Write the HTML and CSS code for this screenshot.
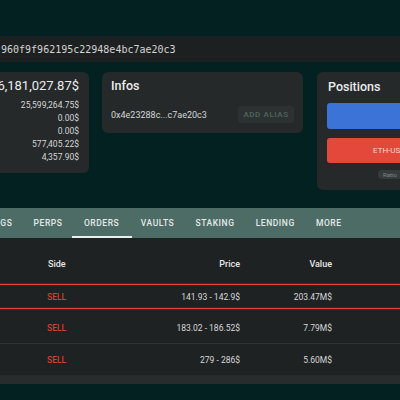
FILE: index.html
```html
<!DOCTYPE html>
<html lang="en">
<head>
<meta charset="utf-8">
<title>Account</title>
<link rel="stylesheet" href="styles.css">
</head>
<body>
<div class="page">
  <div class="addr"><span>960f9f962195c22948e4bc7ae20c3</span></div>

  <div class="cards">
    <section class="card balance">
      <div class="total">6,181,027.87$</div>
      <ul class="amounts">
        <li>25,599,264.75$</li>
        <li>0.00$</li>
        <li>0.00$</li>
        <li>577,405.22$</li>
        <li>4,357.90$</li>
      </ul>
    </section>

    <section class="card infos">
      <h2>Infos</h2>
      <div class="info-row">
        <span class="short-addr">0x4e23288c...c7ae20c3</span>
        <button class="alias" type="button">Add alias</button>
      </div>
    </section>

    <section class="card positions">
      <h2>Positions</h2>
      <div class="bar long"></div>
      <div class="bar short">ETH-USD</div>
      <div class="ratio"><span>Ratio</span></div>
    </section>
  </div>

  <nav class="tabs">
    <span class="tab first">HOLDINGS</span>
    <span class="tab">PERPS</span>
    <span class="tab active">ORDERS</span>
    <span class="tab">VAULTS</span>
    <span class="tab">STAKING</span>
    <span class="tab">LENDING</span>
    <span class="tab">MORE</span>
  </nav>

  <div class="orders">
    <div class="row head">
      <span>Side</span>
      <span class="num">Price</span>
      <span class="num">Value</span>
      <span></span>
    </div>
    <div class="row hl">
      <span class="sell">SELL</span>
      <span class="num">141.93 - 142.9$</span>
      <span class="num">203.47M$</span>
      <span></span>
    </div>
    <div class="row split">
      <span class="sell">SELL</span>
      <span class="num">183.02 - 186.52$</span>
      <span class="num">7.79M$</span>
      <span></span>
    </div>
    <div class="row">
      <span class="sell">SELL</span>
      <span class="num">279 - 286$</span>
      <span class="num">5.60M$</span>
      <span></span>
    </div>
    <div class="orders-foot"></div>
  </div>
</div>
</body>
</html>
```
FILE: styles.css
```css
html, body {
  margin: 0;
  padding: 0;
}

body {
  width: 400px;
  height: 400px;
  overflow: hidden;
  background: #032120;
  font-family: Roboto, "Noto Sans", sans-serif;
  color: #e6e6e6;
}

.page {
  padding-top: 36px;
}

/* full address strip */
.addr {
  height: 26px;
  display: flex;
  align-items: center;
  padding-left: 1px;
  background: #1d2020;
  font-family: "DejaVu Sans Mono", monospace;
  font-size: 10px;
  color: #d4d4d4;
  white-space: nowrap;
  overflow: hidden;
}

/* summary cards */
.cards {
  display: flex;
  align-items: flex-start;
  gap: 13px;
  margin-top: 10px;
}

.card {
  flex: none;
  box-sizing: border-box;
  background: #25292a;
  border-radius: 6px;
}

.card h2 {
  margin: 0;
  font-size: 12.5px;
  line-height: 16px;
  font-weight: 500;
  color: #ececec;
}

.balance {
  width: 110px;
  height: 101px;
  margin-left: -21px;
  padding: 5px 10px 8px 0;
  text-align: right;
}

.total {
  font-size: 13px;
  line-height: 18px;
  color: #ededed;
  white-space: nowrap;
}

.amounts {
  list-style: none;
  margin: 4px 0 0;
  padding: 0;
  font-size: 8.5px;
  line-height: 13px;
  color: #d6d6d6;
}

.infos {
  width: 201px;
  height: 61px;
  padding: 6px 9px 10px;
}

.info-row {
  display: flex;
  align-items: center;
  justify-content: space-between;
  height: 17px;
  margin-top: 12px;
}

.short-addr {
  font-size: 9px;
  color: #d6d6d6;
}

.alias {
  width: 56px;
  height: 17px;
  padding: 0;
  border: 0;
  border-radius: 3px;
  background: #2b3231;
  color: #52655f;
  font-family: Roboto, sans-serif;
  font-size: 8px;
  font-weight: 500;
  letter-spacing: 0.6px;
  text-transform: uppercase;
}

.positions {
  width: 120px;
  height: 118px;
  margin-left: 1px;
  padding: 7px 0 0 10px;
}

.positions h2 {
  padding-left: 1px;
}

.bar {
  border-radius: 3px;
}

.bar.long {
  height: 26px;
  margin-top: 8px;
  background: #3b73d7;
}

.bar.short {
  height: 25px;
  margin-top: 9px;
  padding-left: 46px;
  background: #e4483a;
  font-size: 8px;
  line-height: 25px;
  color: #f6d9d5;
  white-space: nowrap;
}

.ratio {
  display: flex;
  margin-top: 7px;
  padding-left: 51px;
}

.ratio span {
  height: 9px;
  padding: 0 5px;
  border-radius: 4px;
  background: #353b3b;
  font-size: 6px;
  line-height: 9px;
  color: #7d8886;
}

/* section tabs */
.tabs {
  display: flex;
  height: 30px;
  margin-top: 18px;
  background: #4e6c66;
  white-space: nowrap;
}

.tab {
  flex: none;
  padding: 0 10.6px;
  line-height: 30px;
  font-size: 8.5px;
  font-weight: 500;
  letter-spacing: 0.55px;
  color: #e2eae8;
}

.tab.first {
  box-sizing: border-box;
  width: 100px;
  margin-left: -77px;
  text-align: right;
}

.tab.active {
  padding: 0 12.5px 0 12px;
  margin: 0 -1.5px 0 -1.2px;
  box-shadow: inset 0 -2px #e9efee;
}

/* orders table */
.orders {
  background: #1f2223;
}

.row {
  display: grid;
  grid-template-columns: 100px 93px 92px 1fr;
  align-items: center;
  height: 31px;
  padding-left: 47px;
  font-size: 8.5px;
  color: #d8d8d8;
  white-space: nowrap;
}

.row .num {
  text-align: right;
}

.row.head {
  box-sizing: border-box;
  height: 43px;
  padding-top: 18px;
  align-items: start;
  line-height: 16px;
  font-size: 9px;
  font-weight: 500;
  color: #e6e6e6;
}

.row.head span:first-child {
  padding-left: 1px;
}

.row.hl {
  position: relative;
}

.row.hl::after {
  content: "";
  position: absolute;
  left: -6px;
  right: -6px;
  top: 3px;
  bottom: 3px;
  border: 1.5px solid #e0473a;
  border-width: 1.5px 0;
  box-shadow: 0 0 2px rgba(224, 71, 58, 0.55), inset 0 0 2px rgba(224, 71, 58, 0.4);
}

.row.split {
  border-bottom: 1px solid #2e3233;
}

.sell {
  color: #d1402f;
  font-weight: 500;
}

.orders-foot {
  height: 9px;
  background: #282c2d;
}
```
